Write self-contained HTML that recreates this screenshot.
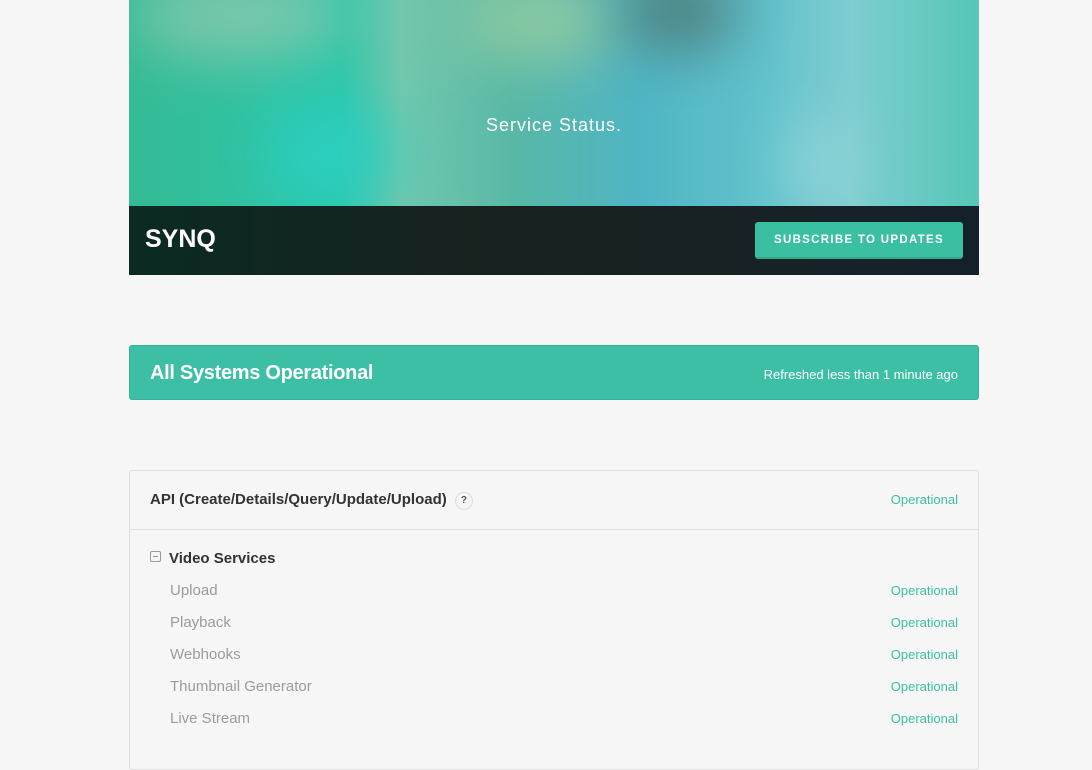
<!DOCTYPE html>
<html><head><meta charset="utf-8"><style>
body{margin:0;background:#f6f6f6;font-family:"Liberation Sans",sans-serif;width:1092px;height:739px;overflow:hidden;position:relative}
.hero{position:absolute;left:129px;top:0;width:850px;height:206px;overflow:hidden;
background:linear-gradient(90deg,#34bb95 0%,#2ec6a8 25%,#73c7ad 32%,#58b8a6 45%,#4fb5c4 60%,#62c2cc 75%,#7ecdd0 85%,#55c7b8 100%)}
.hero .b{position:absolute;border-radius:50%;filter:blur(30px);opacity:.8}
.title{position:absolute;left:0;right:0;top:115px;text-align:center;color:#fff;font-size:18px;letter-spacing:1px}
.bar{position:absolute;left:129px;top:206px;width:850px;height:69px;background:linear-gradient(90deg,#0b2a24,#17221f 40%,#15212a)}
.logo{position:absolute;left:16px;top:19px;color:#fff;font-weight:bold;font-size:25px}
.btn{position:absolute;left:626px;top:16px;width:208px;height:37px;background:#3bbfa3;border-radius:3px;border-bottom:2px solid #2fa88e;box-sizing:border-box;color:#fff;font-weight:bold;font-size:11.5px;letter-spacing:1.3px;text-align:center;line-height:36px}
.status{position:absolute;left:129px;top:345px;width:850px;height:55px;background:#3cbfa5;border:1px solid #36b097;box-sizing:border-box;border-radius:3px;color:#fff}
.status .l{position:absolute;left:20px;top:16px;font-size:20px;font-weight:bold;letter-spacing:-.3px}
.status .r{position:absolute;right:20px;top:21px;font-size:13px}
.box{position:absolute;left:129px;top:470px;width:850px;height:300px;border:1px solid #e0e0e0;border-radius:3px;box-sizing:border-box;background:#f6f6f6}
.row{position:absolute;left:20px;right:20px;font-size:15px}
.op{position:absolute;right:0;color:#3cbfa5;font-size:13px;top:1px}
.sub{color:#9b9b9b;left:40px}
</style></head><body>
<div class="hero">
<div class="b" style="left:0;top:-30px;width:220px;height:90px;background:#8fc9b0"></div>
<div class="b" style="left:330px;top:-20px;width:160px;height:80px;background:#9fcf9f"></div>
<div class="b" style="left:490px;top:-30px;width:120px;height:80px;background:#4d716b"></div>
<div class="b" style="left:130px;top:100px;width:140px;height:110px;background:#2ad0c4"></div>
<div class="b" style="left:660px;top:120px;width:60px;height:90px;background:#9ad9dc"></div>
<div class="title">Service Status.</div>
</div>
<div class="bar"><div class="logo">SYNQ</div><div class="btn">SUBSCRIBE TO UPDATES</div></div>
<div class="status"><div class="l">All Systems Operational</div><div class="r">Refreshed less than 1 minute ago</div></div>
<div class="box">
<div class="row" style="top:20px;font-weight:bold;color:#333">API (Create/Details/Query/Update/Upload) <span style="display:inline-block;width:16px;height:16px;border:1px solid #ddd;border-radius:50%;font-size:10px;text-align:center;line-height:16px;color:#555;vertical-align:1px;margin-left:4px">?</span><span class="op" style="font-weight:normal">Operational</span></div>
<div style="position:absolute;left:0;right:0;top:58px;border-top:1px solid #e0e0e0"></div>
<div class="row" style="top:79px;font-weight:bold;color:#333"><span style="display:inline-block;width:9px;height:9px;border:1px solid #999;border-radius:2px;position:relative;margin-right:8px;vertical-align:1px"><span style="position:absolute;left:2px;right:2px;top:4px;height:1px;background:#999"></span></span>Video Services</div>
<div class="row sub" style="top:111px">Upload<span class="op">Operational</span></div>
<div class="row sub" style="top:143px">Playback<span class="op">Operational</span></div>
<div class="row sub" style="top:175px">Webhooks<span class="op">Operational</span></div>
<div class="row sub" style="top:207px">Thumbnail Generator<span class="op">Operational</span></div>
<div class="row sub" style="top:239px">Live Stream<span class="op">Operational</span></div>
</div>
</body></html>
